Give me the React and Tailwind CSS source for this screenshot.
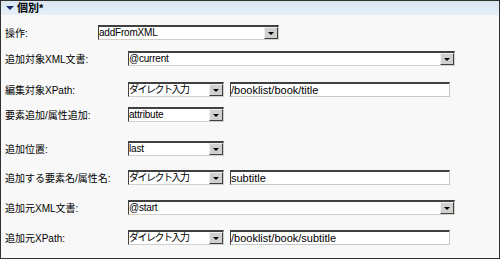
const FONT = { fontFamily: '"Liberation Sans", "Noto Sans CJK JP", sans-serif' }

function Select({ value, width, jp }) {
  return (
    <div
      className={`${width} h-[15px] flex bg-white border-t-2 border-l border-t-[#404040] border-l-[#404040] border-b border-r border-b-[#d4d0c8] border-r-[#d4d0c8]`}
    >
      <div className={`flex-1 min-w-0 leading-[12px] overflow-hidden whitespace-nowrap text-[10px] ${jp ? 'tracking-[-1.5px]' : 'tracking-[-0.2px]'}`}>
        {value}
      </div>
      <div className="w-[14px] h-[12px] bg-[#d0d0d0] border border-t-[#f0f0f0] border-l-[#f0f0f0] border-b-[#404040] border-r-[#404040] flex items-center justify-center">
        <div className="w-0 h-0 border-l-[3px] border-r-[3px] border-t-[3px] border-l-transparent border-r-transparent border-t-black" />
      </div>
    </div>
  )
}

function TextInput({ value }) {
  return (
    <div className="w-[220px] h-[15px] bg-white border-t-2 border-l border-t-[#404040] border-l-[#404040] border-b border-r border-b-[#c8c8c8] border-r-[#c8c8c8] text-[11px] leading-[12px] whitespace-nowrap overflow-hidden">
      {value}
    </div>
  )
}

function Row({ label, labelWidth = 'w-[123px]', mt, children }) {
  return (
    <div className={`flex items-center h-[15px] ${mt}`}>
      <div className={`${labelWidth} text-[10px] leading-[15px] h-[15px] translate-y-[1px] text-black whitespace-nowrap`}>{label}</div>
      <div className="flex items-center gap-[6px]">{children}</div>
    </div>
  )
}

export default function App() {
  return (
    <div className="w-[500px] h-[259px] border border-[#303030] bg-[#f8f8f8] flex flex-col" style={FONT}>
      <div className="h-[14px] bg-gradient-to-b from-[#d8e6f2] to-[#e6f0f8] flex items-center pl-[5px] gap-[3px]">
        <div className="w-0 h-0 border-l-[4px] border-r-[4px] border-t-[4px] border-l-transparent border-r-transparent border-t-[#1a2a6a]" />
        <span className="text-[11px] font-bold leading-[12px] text-black">個別*</span>
      </div>
      <div className="pl-[4px] flex flex-col">
        <Row label="操作:" labelWidth="w-[93px]" mt="mt-[10px]">
          <Select value="addFromXML" width="w-[181px]" />
        </Row>
        <Row label="追加対象XML文書:" mt="mt-[11px]">
          <Select value="@current" width="w-[327px]" />
        </Row>
        <Row label="編集対象XPath:" mt="mt-[16px]">
          <Select value="ダイレクト入力" width="w-[96px]" jp />
          <TextInput value="/booklist/book/title" />
        </Row>
        <Row label="要素追加/属性追加:" mt="mt-[10px]">
          <Select value="attribute" width="w-[96px]" />
        </Row>
        <Row label="追加位置:" mt="mt-[19px]">
          <Select value="last" width="w-[96px]" />
        </Row>
        <Row label="追加する要素名/属性名:" mt="mt-[14px]">
          <Select value="ダイレクト入力" width="w-[96px]" jp />
          <TextInput value="subtitle" />
        </Row>
        <Row label="追加元XML文書:" mt="mt-[15px]">
          <Select value="@start" width="w-[327px]" />
        </Row>
        <Row label="追加元XPath:" mt="mt-[15px]">
          <Select value="ダイレクト入力" width="w-[96px]" jp />
          <TextInput value="/booklist/book/subtitle" />
        </Row>
      </div>
    </div>
  )
}
